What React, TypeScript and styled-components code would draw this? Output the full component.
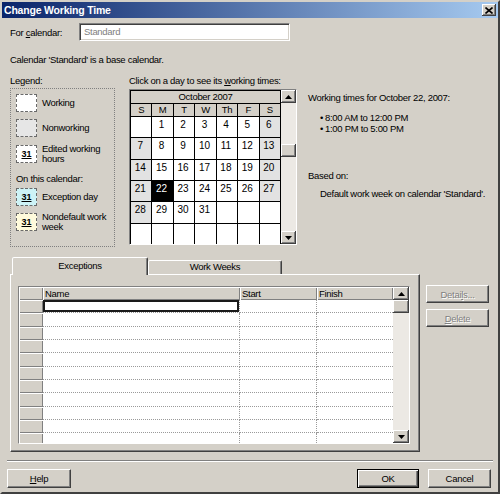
import styled, { createGlobalStyle } from 'styled-components';

const face = '#d4d0c8';
const shade = '#808080';
const dark = '#404040';

const GlobalStyle = createGlobalStyle`
  html, body { margin: 0; padding: 0; background: ${face}; }
  body {
    font-family: 'Liberation Sans', Arial, sans-serif;
    font-size: 9.5px;
    letter-spacing: -0.3px;
    color: #000;
  }
  * { box-sizing: border-box; }
`;

const Window = styled.div`
  width: 500px;
  height: 494px;
  background: ${face};
  border: 2px solid;
  border-color: ${face} ${dark} ${dark} ${face};
  display: flex;
  flex-direction: column;
`;

const TitleBar = styled.div`
  height: 16px;
  background: linear-gradient(to right, #0a246a, #a6caf0);
  display: flex;
  align-items: center;
  justify-content: space-between;
  padding: 0 2px 0 2px;
`;

const TitleText = styled.span`
  color: #fff;
  font-weight: bold;
  font-size: 10.5px;
  letter-spacing: -0.2px;
`;

const CloseButton = styled.div`
  width: 14px;
  height: 12px;
  background: ${face};
  box-shadow: inset -1px -1px ${dark}, inset 1px 1px #fff, inset -2px -2px ${shade};
  display: flex;
  align-items: center;
  justify-content: center;
`;

const Content = styled.div`
  flex: 1;
  display: flex;
  flex-direction: column;
  padding: 5px 8px 0 8px;
`;

const Mn = styled.span`
  text-decoration: underline;
`;

const ForRow = styled.div`
  display: flex;
  align-items: center;
  height: 18px;
`;

const FieldLabel = styled.span`
  width: 69px;
`;

const TextBox = styled.div`
  width: 211px;
  height: 18px;
  background: #fff;
  border: 1px solid;
  border-color: ${shade} #fff #fff ${shade};
  box-shadow: inset 1px 1px ${dark}, inset -1px -1px ${face};
  color: ${shade};
  padding-left: 4px;
  line-height: 16px;
`;

const Line = styled.div<{ $top?: number; $left?: number }>`
  line-height: 13px;
  margin-top: ${(p) => p.$top ?? 0}px;
  margin-left: ${(p) => p.$left ?? 0}px;
  white-space: nowrap;
`;

const Middle = styled.div`
  display: flex;
  margin-top: 8px;
`;

const LegendCol = styled.div`
  width: 105px;
  flex: none;
  display: flex;
  flex-direction: column;
`;

const LegendBox = styled.div`
  margin-top: 1px;
  height: 159px;
  border: 1px dotted ${shade};
  padding: 5px 0 0 5px;
  display: flex;
  flex-direction: column;
`;

const LegendItem = styled.div<{ $gap?: number; $top?: number }>`
  display: flex;
  align-items: center;
  gap: 5px;
  min-height: 18px;
  margin-top: ${(p) => p.$top ?? 0}px;
  margin-bottom: ${(p) => p.$gap ?? 7}px;
`;

const Swatch = styled.div<{ $bg: string }>`
  width: 21px;
  height: 18px;
  flex: none;
  background: ${(p) => p.$bg};
  border: 1px dashed #6a6a6a;
  font-weight: bold;
  font-size: 9px;
  letter-spacing: 0;
  text-decoration: underline;
  display: flex;
  align-items: center;
  justify-content: center;
`;

const LegendText = styled.span`
  line-height: 10px;
  white-space: nowrap;
`;

const CalendarCol = styled.div`
  margin-left: 14px;
  width: 168px;
  flex: none;
  display: flex;
  flex-direction: column;
`;

const CalendarFrame = styled.div`
  margin-top: 2px;
  height: 156px;
  border: 1px solid;
  border-color: ${shade} #fff #fff ${shade};
  display: flex;
`;

const MonthPane = styled.div`
  flex: 1;
  display: flex;
  flex-direction: column;
  border: 1px solid #000;
  border-bottom: none;
`;

const MonthHeader = styled.div`
  height: 13px;
  line-height: 12px;
  text-align: center;
  background: ${face};
  border-bottom: 1px solid #000;
`;

const DayGrid = styled.div`
  flex: 1;
  display: grid;
  grid-template-columns: repeat(7, 1fr);
  grid-template-rows: 12px repeat(6, 1fr);
  gap: 1px;
  background: #000;
`;

const DayHead = styled.div`
  background: ${face};
  text-align: center;
  line-height: 12px;
`;

type DayKind = 'work' | 'off' | 'sel';

const DayCell = styled.div<{ $kind: DayKind }>`
  background: ${(p) => (p.$kind === 'sel' ? '#000' : p.$kind === 'off' ? '#e2e2e2' : '#fff')};
  color: ${(p) => (p.$kind === 'sel' ? '#fff' : '#000')};
  text-align: center;
  padding: 2px 2px 0 0;
  font-size: 10px;
  letter-spacing: 0;
`;

const ScrollTrack = styled.div<{ $width: number }>`
  width: ${(p) => p.$width}px;
  flex: none;
  display: flex;
  flex-direction: column;
  background: #ece9e4;
`;

const ScrollButton = styled.div<{ $offset?: number }>`
  height: 13px;
  flex: none;
  margin-top: ${(p) => p.$offset ?? 0}px;
  background: ${face};
  box-shadow: inset -1px -1px ${dark}, inset 1px 1px #fff, inset -2px -2px ${shade};
  display: flex;
  align-items: center;
  justify-content: center;
`;

const Spacer = styled.div`
  flex: 1;
`;

const InfoCol = styled.div`
  margin-left: 11px;
  padding-top: 17px;
  display: flex;
  flex-direction: column;
`;

const BulletList = styled.ul`
  list-style: none;
  margin: 8px 0 0 12px;
  padding: 0;
`;

const Bullet = styled.li`
  line-height: 11px;
  &::before {
    content: '•';
    margin-right: 2px;
  }
`;

const TabSection = styled.div`
  display: flex;
  margin-top: 10px;
`;

const TabArea = styled.div`
  width: 410px;
  flex: none;
  display: flex;
  flex-direction: column;
`;

const TabStrip = styled.div`
  height: 17px;
  display: flex;
  align-items: flex-end;
  padding-left: 2px;
`;

const Tab = styled.div<{ $active?: boolean; $width: number }>`
  width: ${(p) => p.$width}px;
  height: ${(p) => (p.$active ? 18 : 14)}px;
  margin-bottom: ${(p) => (p.$active ? -1 : 0)}px;
  position: relative;
  z-index: ${(p) => (p.$active ? 1 : 0)};
  background: ${face};
  border: 1px solid;
  border-bottom: none;
  border-color: #fff ${dark} transparent #fff;
  box-shadow: inset -1px 0 ${shade};
  border-radius: 2px 2px 0 0;
  text-align: center;
  line-height: ${(p) => (p.$active ? 16 : 12)}px;
`;

const TabPanel = styled.div`
  height: 178px;
  border: 1px solid;
  border-color: #fff ${dark} ${dark} #fff;
  box-shadow: inset -1px -1px ${shade};
  padding: 11px 0 0 7px;
`;

const Table = styled.div`
  width: 392px;
  height: 158px;
  border: 1px solid;
  border-color: ${shade} #fff #fff ${shade};
  display: flex;
`;

const TableMain = styled.div`
  flex: 1;
  display: flex;
  flex-direction: column;
  background: #fff;
`;

const cols = '24px 197px 77px 1fr';

const HeaderRow = styled.div`
  height: 13px;
  flex: none;
  display: grid;
  grid-template-columns: ${cols};
`;

const HeaderCell = styled.div`
  background: ${face};
  box-shadow: inset 1px 1px #fff, inset -1px -1px ${shade};
  padding-left: 2px;
  line-height: 13px;
`;

const Rows = styled.div`
  flex: 1;
  overflow: hidden;
`;

const Row = styled.div`
  height: 13.33px;
  display: grid;
  grid-template-columns: ${cols};
`;

const RowHead = styled.div`
  background: ${face};
  box-shadow: inset 1px 1px #fff, inset -1px -1px ${shade};
`;

const DataCell = styled.div<{ $last?: boolean; $selected?: boolean }>`
  border-bottom: 1px dotted #9a9a9a;
  border-right: ${(p) => (p.$last ? 'none' : '1px dotted #9a9a9a')};
  box-shadow: ${(p) => (p.$selected ? 'inset 0 0 0 2px #1a1a1a' : 'none')};
`;

const SideButtons = styled.div`
  margin: 28px 0 0 6px;
  display: flex;
  flex-direction: column;
  gap: 6px;
`;

const Button = styled.div<{ $width: number; $height?: number; $disabled?: boolean; $default?: boolean }>`
  width: ${(p) => p.$width}px;
  height: ${(p) => p.$height ?? 18}px;
  background: ${face};
  border: 1px solid;
  border-color: ${(p) => (p.$default ? '#000' : `#fff ${dark} ${dark} #fff`)};
  box-shadow: ${(p) =>
    p.$default
      ? `inset 1px 1px #fff, inset -1px -1px ${dark}, inset -2px -2px ${shade}`
      : `inset -1px -1px ${shade}`};
  color: ${(p) => (p.$disabled ? shade : '#000')};
  text-shadow: ${(p) => (p.$disabled ? '1px 1px #fff' : 'none')};
  display: flex;
  align-items: center;
  justify-content: center;
`;

const Separator = styled.div`
  margin: 8px 0 0 -3px;
  width: 486px;
  height: 2px;
  border-top: 1px solid ${shade};
  border-bottom: 1px solid #fff;
`;

const ButtonRow = styled.div`
  margin: 7px 0 0 -3px;
  width: 484px;
  display: flex;
  gap: 9px;
`;

const Arrow = ({ down }: { down?: boolean }) => (
  <svg width="7" height="4" viewBox="0 0 7 4">
    <polygon points={down ? '0,0 7,0 3.5,4' : '0,4 7,4 3.5,0'} fill="#000" />
  </svg>
);

const Scrollbar = ({ width, thumbOffset }: { width: number; thumbOffset: number }) => (
  <ScrollTrack $width={width}>
    <ScrollButton>
      <Arrow />
    </ScrollButton>
    <ScrollButton $offset={thumbOffset} />
    <Spacer />
    <ScrollButton>
      <Arrow down />
    </ScrollButton>
  </ScrollTrack>
);

const weekDays = ['S', 'M', 'T', 'W', 'Th', 'F', 'S'];

const calendarCells: { day?: number; kind: DayKind }[] = Array.from({ length: 42 }, (_, i) => {
  const day = i;
  const col = i % 7;
  if (day < 1 || day > 31) return { kind: 'work' };
  if (day === 22) return { day, kind: 'sel' };
  return { day, kind: col === 0 || col === 6 ? 'off' : 'work' };
});

const App = () => {
  return (
    <>
      <GlobalStyle />
      <Window>
        <TitleBar>
          <TitleText>Change Working Time</TitleText>
          <CloseButton>
            <svg width="8" height="7" viewBox="0 0 8 7">
              <path d="M0.5 0.5 L7.5 6.5 M7.5 0.5 L0.5 6.5" stroke="#000" strokeWidth="1.6" />
            </svg>
          </CloseButton>
        </TitleBar>
        <Content>
          <ForRow>
            <FieldLabel>
              For <Mn>c</Mn>alendar:
            </FieldLabel>
            <TextBox>Standard</TextBox>
          </ForRow>
          <Line $top={12}>Calendar 'Standard' is a base calendar.</Line>

          <Middle>
            <LegendCol>
              <Line>Legend:</Line>
              <LegendBox>
                <LegendItem>
                  <Swatch $bg="#fff" />
                  <LegendText>Working</LegendText>
                </LegendItem>
                <LegendItem>
                  <Swatch $bg="#e6e6e6" />
                  <LegendText>Nonworking</LegendText>
                </LegendItem>
                <LegendItem $gap={8}>
                  <Swatch $bg="#fff">31</Swatch>
                  <LegendText>
                    Edited working
                    <br />
                    hours
                  </LegendText>
                </LegendItem>
                <Line>On this calendar:</Line>
                <LegendItem $top={3} $gap={6}>
                  <Swatch $bg="#cdf3f6">31</Swatch>
                  <LegendText>Exception day</LegendText>
                </LegendItem>
                <LegendItem>
                  <Swatch $bg="#fffbdc">31</Swatch>
                  <LegendText>
                    Nondefault work
                    <br />
                    week
                  </LegendText>
                </LegendItem>
              </LegendBox>
            </LegendCol>

            <CalendarCol>
              <Line>
                Click on a day to see its <Mn>w</Mn>orking times:
              </Line>
              <CalendarFrame>
                <MonthPane>
                  <MonthHeader>October 2007</MonthHeader>
                  <DayGrid>
                    {weekDays.map((d, i) => (
                      <DayHead key={`h${i}`}>{d}</DayHead>
                    ))}
                    {calendarCells.map((c, i) => (
                      <DayCell key={i} $kind={c.kind}>
                        {c.day}
                      </DayCell>
                    ))}
                  </DayGrid>
                </MonthPane>
                <Scrollbar width={15} thumbOffset={41} />
              </CalendarFrame>
            </CalendarCol>

            <InfoCol>
              <Line>Working times for October 22, 2007:</Line>
              <BulletList>
                <Bullet>8:00 AM to 12:00 PM</Bullet>
                <Bullet>1:00 PM to 5:00 PM</Bullet>
              </BulletList>
              <Line $top={35}>Based on:</Line>
              <Line $top={5} $left={12}>
                Default work week on calendar 'Standard'.
              </Line>
            </InfoCol>
          </Middle>

          <TabSection>
            <TabArea>
              <TabStrip>
                <Tab $active $width={136}>
                  Exceptions
                </Tab>
                <Tab $width={134}>Work Weeks</Tab>
              </TabStrip>
              <TabPanel>
                <Table>
                  <TableMain>
                    <HeaderRow>
                      <HeaderCell />
                      <HeaderCell>Name</HeaderCell>
                      <HeaderCell>Start</HeaderCell>
                      <HeaderCell>Finish</HeaderCell>
                    </HeaderRow>
                    <Rows>
                      {Array.from({ length: 11 }, (_, i) => (
                        <Row key={i}>
                          <RowHead />
                          <DataCell $selected={i === 0} />
                          <DataCell />
                          <DataCell $last />
                        </Row>
                      ))}
                    </Rows>
                  </TableMain>
                  <Scrollbar width={16} thumbOffset={0} />
                </Table>
              </TabPanel>
            </TabArea>
            <SideButtons>
              <Button $width={63} $disabled>
                Detai<Mn>l</Mn>s...
              </Button>
              <Button $width={63} $disabled>
                <Mn>D</Mn>elete
              </Button>
            </SideButtons>
          </TabSection>

          <Separator />
          <ButtonRow>
            <Button $width={64} $height={19}>
              <Mn>H</Mn>elp
            </Button>
            <Spacer />
            <Button $width={62} $height={19} $default>
              OK
            </Button>
            <Button $width={63} $height={19}>
              Cancel
            </Button>
          </ButtonRow>
        </Content>
      </Window>
    </>
  );
};

export default App;
